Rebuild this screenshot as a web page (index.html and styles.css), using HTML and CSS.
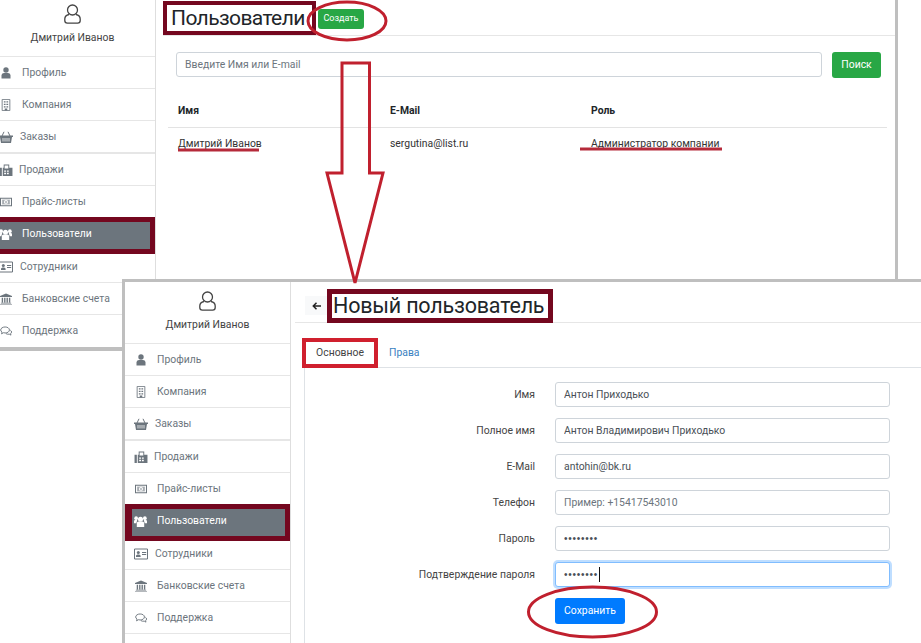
FILE: index.html
```html
<!DOCTYPE html>
<html lang="ru">
<head>
<meta charset="utf-8">
<title>Пользователи</title>
<link rel="stylesheet" href="styles.css">
</head>
<body>
<svg class="defs" width="0" height="0">
  <symbol id="i-avatar" viewBox="0 0 17 20"><circle cx="8.5" cy="6" r="5" fill="none" stroke="currentColor" stroke-width="1.3"/><path d="M5 10.5C2.5 11 .8 12.5.8 15v1.5c0 1.5 1 2.6 2.6 2.6h10.2c1.6 0 2.6-1.100 2.600-2.600V15c0-2.500-1.700-4-4.200-4.500" fill="none" stroke="currentColor" stroke-width="1.300"/></symbol>
  <symbol id="i-user" viewBox="0 0 12 12"><circle cx="6" cy="3" r="2.700" fill="currentColor"/><path d="M1.500 11.500V8.500C1.500 6.800 3 6 4 6h4c1 0 2.500.8 2.500 2.500v3z" fill="currentColor"/></symbol>
  <symbol id="i-building" viewBox="0 0 12 14"><path d="M1.500.5h9v13h-9z" fill="none" stroke="currentColor"/><path d="M3.500 2.500h2v1.500h-2zM6.500 2.500h2v1.500h-2zM3.500 5.500h2V7h-2zM6.500 5.500h2V7h-2zM3.500 8.500h2V10h-2zM6.500 8.500h2V10h-2zM4.500 11h3v2.500h-3z" fill="currentColor"/></symbol>
  <symbol id="i-basket" viewBox="0 0 14 12"><path d="M3 5 5 .8M11 5 9 .8" fill="none" stroke="currentColor"/><path d="M0 4.500h14V6h-1l-1 6H2L1 6H0z" fill="currentColor"/><path d="M4 7v3.500M6 7v3.500M8 7v3.500M10 7v3.500" stroke="#fff" stroke-width=".8"/></symbol>
  <symbol id="i-fax" viewBox="0 0 14 13"><path d="M0 4h2.500v9H0zM3.500 4h1V.5h6V4H14v9H3.500z" fill="currentColor"/><path d="M5.500 1.500h4V5h-4zM5 7h2v1.500H5zM8 7h2v1.500H8zM5 9.500h2V11H5zM8 9.500h2V11H8z" fill="#fff"/></symbol>
  <symbol id="i-money" viewBox="0 0 14 10"><path d="M.6.6h12.800v8.800H.6z" fill="none" stroke="currentColor" stroke-width="1.200"/><path d="M2.500 2.200h9v5.600h-9z" fill="currentColor" opacity=".6"/><circle cx="7" cy="5" r="2.400" fill="#fff"/><path d="M6.500 3.800h1v2.600h-1z" fill="currentColor"/></symbol>
  <symbol id="i-users" viewBox="0 0 14 12"><circle cx="7" cy="3.500" r="2.700" fill="currentColor"/><circle cx="2.300" cy="2.400" r="2" fill="currentColor"/><circle cx="11.700" cy="2.400" r="2" fill="currentColor"/><path d="M3 12V8.500c0-1.800 1-2.500 2-2.500h4c1 0 2 .7 2 2.500V12zM0 8V6c0-1 .7-1.500 1.500-1.500h2L2.500 8zM14 8V6c0-1-.7-1.500-1.500-1.500h-2l1 3.500z" fill="currentColor"/></symbol>
  <symbol id="i-card" viewBox="0 0 14 11"><path d="M.5.5h13v10H.5z" fill="none" stroke="currentColor"/><circle cx="4.300" cy="4" r="1.500" fill="currentColor"/><path d="M2 8.500V7.500c0-1 1-1.500 2.300-1.500s2.300.5 2.300 1.500v1zM8 3.500h4.200v1H8zM8 5.500h4.200v1H8z" fill="currentColor"/></symbol>
  <symbol id="i-bank" viewBox="0 0 14 13"><path d="M7 0l7 3v1.200H0V3zM1 11h12v.8H1zM0 12.200h14V13H0zM2 5h1.600v5.500H2zM4.800 5h1.600v5.500H4.800zM7.600 5h1.600v5.500H7.600zM10.400 5H12v5.500h-1.600z" fill="currentColor"/></symbol>
  <symbol id="i-chat" viewBox="0 0 14 11"><path d="M6 .8c2.800 0 5 1.500 5 3.500S8.800 7.800 6 7.800c-.8 0-1.400-.1-2-.3L1.800 8.800l.6-2C1.300 6.200.8 5.300.8 4.300.8 2.300 3.200.8 6 .8z" fill="none" stroke="currentColor" stroke-width="1.100"/><path d="M12 4.500c1 .6 1.500 1.400 1.500 2.200 0 .8-.5 1.500-1.200 2l.5 1.600-2-1.100c-1.500.3-3 0-4-.7" fill="none" stroke="currentColor" stroke-width="1.100"/></symbol>
</svg>

<div class="desktop">
  <section class="window first">
    <nav class="sidebar">
      <div class="profile"><svg class="avatar"><use href="#i-avatar"/></svg><span>Дмитрий Иванов</span></div>
      <a class="row"><svg class="ic"><use href="#i-user"/></svg>Профиль</a>
      <a class="row"><svg class="ic"><use href="#i-building"/></svg>Компания</a>
      <a class="row thick"><svg class="ic wide"><use href="#i-basket"/></svg>Заказы</a>
      <a class="row"><svg class="ic wider"><use href="#i-fax"/></svg>Продажи</a>
      <a class="row"><svg class="ic"><use href="#i-money"/></svg>Прайс-листы</a>
      <a class="row selected"><svg class="ic"><use href="#i-users"/></svg>Пользователи</a>
      <a class="row"><svg class="ic wide"><use href="#i-card"/></svg>Сотрудники</a>
      <a class="row"><svg class="ic"><use href="#i-bank"/></svg>Банковские счета</a>
      <a class="row last"><svg class="ic"><use href="#i-chat"/></svg>Поддержка</a>
    </nav>
    <main class="content list">
      <header class="list-head">
        <h1 class="title boxed">Пользователи</h1>
        <button class="btn small green">Создать</button>
      </header>
      <div class="search">
        <input class="input grow" placeholder="Введите Имя или E-mail">
        <button class="btn green search-btn">Поиск</button>
      </div>
      <div class="table">
        <div class="cell th">Имя</div><div class="cell th">E-Mail</div><div class="cell th">Роль</div>
        <div class="cell">Дмитрий Иванов</div><div class="cell">sergutina@list.ru</div><div class="cell">Администратор компании</div>
      </div>
    </main>
  </section>

  <section class="window second">
    <nav class="sidebar">
      <div class="profile"><svg class="avatar"><use href="#i-avatar"/></svg><span>Дмитрий Иванов</span></div>
      <a class="row"><svg class="ic"><use href="#i-user"/></svg>Профиль</a>
      <a class="row"><svg class="ic"><use href="#i-building"/></svg>Компания</a>
      <a class="row thick"><svg class="ic wide"><use href="#i-basket"/></svg>Заказы</a>
      <a class="row"><svg class="ic wider"><use href="#i-fax"/></svg>Продажи</a>
      <a class="row"><svg class="ic"><use href="#i-money"/></svg>Прайс-листы</a>
      <a class="row selected"><svg class="ic"><use href="#i-users"/></svg>Пользователи</a>
      <a class="row"><svg class="ic wide"><use href="#i-card"/></svg>Сотрудники</a>
      <a class="row"><svg class="ic"><use href="#i-bank"/></svg>Банковские счета</a>
      <a class="row"><svg class="ic"><use href="#i-chat"/></svg>Поддержка</a>
    </nav>
    <main class="content form-page">
      <header class="form-head">
        <button class="back"><svg width="9" height="8" viewBox="0 0 9 8"><path d="M9 4H2M4.500 .8 1.300 4l3.200 3.200" fill="none" stroke="#222" stroke-width="1.500"/></svg></button>
        <h1 class="title boxed big">Новый пользователь</h1>
      </header>
      <div class="tabs">
        <a class="tab active">Основное</a>
        <a class="tab link">Права</a>
      </div>
      <form class="panel">
        <label class="field"><span class="lab">Имя</span><input class="input wide-input" value="Антон Приходько"></label>
        <label class="field"><span class="lab">Полное имя</span><input class="input wide-input" value="Антон Владимирович Приходько"></label>
        <label class="field"><span class="lab">E-Mail</span><input class="input wide-input" value="antohin@bk.ru"></label>
        <label class="field"><span class="lab">Телефон</span><input class="input wide-input" placeholder="Пример: +15417543010"></label>
        <label class="field"><span class="lab">Пароль</span><input class="input wide-input pass" type="password" value="12345678"></label>
        <label class="field"><span class="lab">Подтверждение пароля</span><span class="focus-wrap"><input class="input wide-input pass focused" type="password" value="12345678"><i class="caret"></i></span></label>
        <div class="actions"><button class="btn blue save" type="button">Сохранить</button></div>
      </form>
    </main>
  </section>

  <svg class="marks" width="921" height="643" viewBox="0 0 921 643">
    <ellipse cx="347" cy="21" rx="39" ry="19" class="mark"/>
    <path d="M342 63h27.500v110H383l-28 110-28-110h15z" class="mark"/>
    <path d="M178 150h81M580 149h142" class="mark under"/>
    <ellipse cx="592.500" cy="612" rx="64" ry="25" class="mark"/>
  </svg>
</div>
</body>
</html>
```

FILE: styles.css
```css
* { box-sizing: border-box; }
html, body { margin: 0; background: #fff; }
body { font: 10.4px/1.3 Roboto, "Open Sans", sans-serif; color: #333; }
.defs { position: absolute; }
.desktop { position: relative; width: 921px; height: 643px; overflow: hidden; background: #fff; }

.window { position: absolute; display: flex; align-items: flex-start; background: #fff; }
.window.first { left: -10px; top: 0; }
.window.second { left: 122px; top: 279px; width: 799px; height: 364px; border-top: 3px solid #bfbfbf; border-left: 3px solid #bfbfbf; }

.sidebar { width: 166px; flex: none; display: flex; flex-direction: column; border-right: 1px solid #dedede; color: #6c757d; background: #fff; }
.first .sidebar { height: 351px; border-bottom: 4px solid #bfbfbf; }
.second .sidebar { height: 361px; padding-top: 5px; }
.profile { height: 57px; display: flex; flex-direction: column; align-items: center; border-bottom: 1px solid #e6e6e6; color: #444; padding-top: 4px; }
.avatar { width: 17px; height: 20px; color: #444; margin-bottom: 7px; }
.row { height: 32px; display: flex; align-items: center; padding: 0 0 0 10px; border-bottom: 1px solid #e6e6e6; }
.row.thick { height: 33px; border-bottom-width: 2px; }
.row.last { border-bottom: 0; }
.ic { width: 12px; height: 12px; flex: none; margin-right: 10px; color: #6c757d; }
.ic.wide { width: 14px; margin-left: -1px; margin-right: 7px; }
.ic.wider { width: 14px; margin-left: -1px; margin-right: 6px; }
.row.selected { height: 37px; margin: -1px 0 -3px; background: #6c757d; color: #fff; border: 5px solid #74071f; padding: 0 0 3px 5px; }
.selected .ic { color: #fff; width: 13px; height: 13px; margin-left: -1px; }
.second .row.selected { border-left-width: 7px; padding-left: 3px; }

.content { background: #fff; }
.list { width: 742px; height: 279px; border-right: 3px solid #bfbfbf; }
.list-head { height: 36px; margin-left: 7px; display: flex; align-items: flex-start; border-bottom: 1px solid #e6e6e6; padding-top: 1px; }
.title { margin: 0; font-size: 21px; font-weight: 400; line-height: 26px; color: #212529; white-space: nowrap; letter-spacing: -.6px; }
.boxed { border: 4px solid #74071f; width: 153px; flex: none; height: 34px; padding: 0 0 0 4px; display: flex; align-items: center; }
.big { border-width: 5px; height: 34px; padding: 0 0 0 1px; width: 226px; font-size: 21.5px; letter-spacing: -.2px; }
.btn { border: 0; border-radius: 3px; color: #fff; font: inherit; padding: 0; }
.green { background: #28a745; }
.blue { background: #007bff; }
.small { width: 46px; height: 20px; font-size: 9px; margin: 8px 0 0 2px; }
.search { display: flex; margin: 16px 0 0 20px; gap: 10px; }
.input { height: 25px; border: 1px solid #ced4da; border-radius: 3px; padding: 0 8px; font: inherit; color: #495057; background: #fff; outline: 0; }
.input::placeholder { color: #6c757d; opacity: 1; }
.grow { width: 646px; }
.search-btn { width: 49px; height: 26px; }
.table { display: grid; grid-template-columns: 212px 201px 306px; margin: 23px 0 0 12px; }
.cell { padding: 0 10px; height: 32px; display: flex; align-items: center; }
.th { font-weight: 700; height: 27px; padding-bottom: 7px; border-bottom: 1px solid #e3e3e3; color: #212529; }

.form-page { flex: 1; min-width: 0; }
.form-head { height: 41px; margin-left: 4px; display: flex; align-items: flex-start; border-bottom: 1px solid #e6e6e6; padding-top: 7px; }
.back { width: 23px; height: 19px; margin: 7px 0 0 10px; border: 0; background: #f8f9fa; padding: 0; display: flex; align-items: center; justify-content: center; }
.form-head .big { margin: 0 0 0 -1px; }
.tabs { margin: 15px 0 0 13px; height: 30px; display: flex; border-bottom: 1px solid #dee2e6; }
.tab { height: 30px; display: flex; align-items: center; }
.active { width: 76px; margin-left: -2px; justify-content: center; border: 4px solid #d0202e; color: #444; background: #fff; }
.link { color: #3a7fc1; margin-left: 11px; }
.panel { margin-left: 13px; height: 275px; border-left: 1px solid #dee2e6; padding-top: 14px; display: flex; flex-direction: column; gap: 11px; }
.field { display: flex; align-items: center; gap: 20px; height: 25px; }
.lab { width: 230px; text-align: right; color: #444; }
.wide-input { width: 335px; }
.pass { letter-spacing: .75px; font-family: "Liberation Sans", sans-serif; font-size: 10px; }
.focus-wrap { position: relative; display: block; height: 25px; }
.focused { border-color: #80bdff; box-shadow: 0 0 0 2px rgba(0, 123, 255, .25); }
.caret { position: absolute; left: 44px; top: 5px; width: 1px; height: 15px; background: #111; }
.actions { margin: 0 0 0 250px; }
.save { width: 70px; height: 26px; }

.marks { position: absolute; left: 0; top: 0; pointer-events: none; }
.mark { fill: none; stroke: #c0202e; stroke-width: 3; }
.mark.under { stroke: #b52a3a; }
```
